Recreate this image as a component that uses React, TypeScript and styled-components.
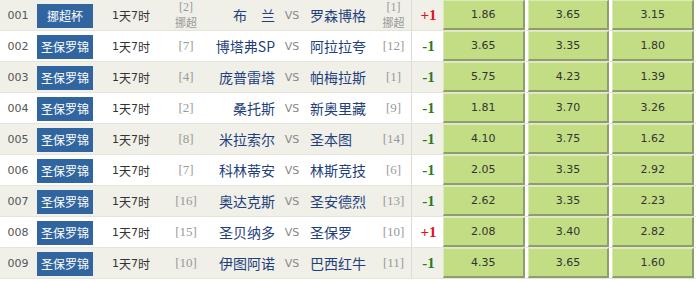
import styled, { createGlobalStyle } from 'styled-components';

const GlobalStyle = createGlobalStyle`
  html, body {
    margin: 0;
    padding: 0;
    background: #fff;
  }
  body {
    font-family: "DejaVu Sans", "Noto Sans CJK SC", sans-serif;
  }
`;

type Match = {
  no: string;
  league: string;
  homeRank: string;
  homeNote?: string;
  home: string;
  away: string;
  awayRank: string;
  awayNote?: string;
  handicap: string;
  odds: [string, string, string];
};

const MATCHES: Match[] = [
  { no: '001', league: '挪超杯', homeRank: '[2]', homeNote: '挪超', home: '布　兰', away: '罗森博格', awayRank: '[1]', awayNote: '挪超', handicap: '+1', odds: ['1.86', '3.65', '3.15'] },
  { no: '002', league: '圣保罗锦', homeRank: '[7]', home: '博塔弗SP', away: '阿拉拉夸', awayRank: '[12]', handicap: '-1', odds: ['3.65', '3.35', '1.80'] },
  { no: '003', league: '圣保罗锦', homeRank: '[4]', home: '庞普雷塔', away: '帕梅拉斯', awayRank: '[1]', handicap: '-1', odds: ['5.75', '4.23', '1.39'] },
  { no: '004', league: '圣保罗锦', homeRank: '[2]', home: '桑托斯', away: '新奥里藏', awayRank: '[9]', handicap: '-1', odds: ['1.81', '3.70', '3.26'] },
  { no: '005', league: '圣保罗锦', homeRank: '[8]', home: '米拉索尔', away: '圣本图', awayRank: '[14]', handicap: '-1', odds: ['4.10', '3.75', '1.62'] },
  { no: '006', league: '圣保罗锦', homeRank: '[7]', home: '科林蒂安', away: '林斯竞技', awayRank: '[6]', handicap: '-1', odds: ['2.05', '3.35', '2.92'] },
  { no: '007', league: '圣保罗锦', homeRank: '[16]', home: '奥达克斯', away: '圣安德烈', awayRank: '[13]', handicap: '-1', odds: ['2.62', '3.35', '2.23'] },
  { no: '008', league: '圣保罗锦', homeRank: '[15]', home: '圣贝纳多', away: '圣保罗', awayRank: '[10]', handicap: '+1', odds: ['2.08', '3.40', '2.82'] },
  { no: '009', league: '圣保罗锦', homeRank: '[10]', home: '伊图阿诺', away: '巴西红牛', awayRank: '[11]', handicap: '-1', odds: ['4.35', '3.65', '1.60'] },
];

const Table = styled.div`
  width: 696px;
  display: flex;
  flex-direction: column;
`;

const Row = styled.div<{ $odd: boolean }>`
  display: grid;
  grid-template-columns: 36px 58px 74px 36px 76px 24px 72px 35px 32px 253px;
  height: 30px;
  border-bottom: 1px solid #e4e4da;
  background: ${p => (p.$odd ? '#f0f0e8' : '#ffffff')};
`;

const Cell = styled.div<{ $align?: 'left' | 'right' | 'center' }>`
  display: flex;
  align-items: center;
  justify-content: ${p => (p.$align === 'left' ? 'flex-start' : p.$align === 'right' ? 'flex-end' : 'center')};
  white-space: nowrap;
`;

const Num = styled(Cell)`
  color: #555;
  font-size: 11px;
  font-family: "DejaVu Sans", sans-serif;
`;

const Badge = styled.div`
  width: 56px;
  height: 24px;
  margin-top: 1px;
  display: flex;
  align-items: center;
  justify-content: center;
  background: #3165a0;
  color: #fff;
  font-size: 12px;
  font-family: "Noto Sans CJK SC", sans-serif;
`;

const Time = styled(Cell)`
  color: #333;
  font-size: 12px;
  font-family: "DejaVu Sans", "Noto Sans CJK SC", sans-serif;
  & > b {
    font-weight: normal;
    font-family: "Noto Sans CJK SC", sans-serif;
  }
  & > span {
    font-size: 11px;
  }
`;

const Rank = styled(Cell)<{ $stacked?: boolean }>`
  flex-direction: column;
  color: #999;
  font-size: ${p => (p.$stacked ? '12px' : '13px')};
  font-family: "Liberation Serif", serif;
  & > span {
    display: block;
    line-height: 14px;
  }
  & > small {
    display: block;
    font-size: 11px;
    font-family: "Noto Sans CJK SC", sans-serif;
    line-height: 16px;
  }
`;

const Team = styled(Cell)<{ $side: 'home' | 'away' }>`
  color: #1f3f7c;
  font-size: 14px;
  font-family: "Noto Sans CJK SC", sans-serif;
  padding: ${p => (p.$side === 'home' ? '0 5px 0 0' : '0 0 0 6px')};
`;

const Vs = styled(Cell)`
  color: #888;
  font-size: 11px;
  font-family: "DejaVu Sans", sans-serif;
`;

const Handicap = styled(Cell)<{ $plus: boolean }>`
  border-left: 1px solid #dcdcd2;
  color: ${p => (p.$plus ? '#e3101e' : '#2a7a22')};
  font-size: 15px;
  font-weight: bold;
  font-family: "Liberation Serif", serif;
  padding-left: 2px;
`;

const OddsGroup = styled.div`
  display: grid;
  grid-template-columns: repeat(3, 1fr);
  gap: 3px;
  padding: 0 2px 0 0;
  background: #ffffff;
`;

const Odd = styled.div`
  display: flex;
  align-items: center;
  justify-content: center;
  box-sizing: border-box;
  height: 30px;
  background: #c3dd84;
  border-top: 1px solid #dcebb6;
  border-left: 1px solid #dcebb6;
  border-right: 2px solid #8e9d6c;
  border-bottom: 2px solid #8e9d6c;
  color: #333;
  font-size: 11px;
  font-family: "DejaVu Sans", sans-serif;
`;

const App = () => (
  <>
    <GlobalStyle />
    <Table>
      {MATCHES.map((m, i) => (
        <Row key={m.no} $odd={i % 2 === 0}>
          <Num>{m.no}</Num>
          <Cell>
            <Badge>{m.league}</Badge>
          </Cell>
          <Time>
            <span>1</span><b>天</b><span>7</span><b>时</b>
          </Time>
          <Rank $stacked={!!m.homeNote}>
            <span>{m.homeRank}</span>
            {m.homeNote && <small>{m.homeNote}</small>}
          </Rank>
          <Team $side="home" $align="right">{m.home}</Team>
          <Vs>VS</Vs>
          <Team $side="away" $align="left">{m.away}</Team>
          <Rank $stacked={!!m.awayNote}>
            <span>{m.awayRank}</span>
            {m.awayNote && <small>{m.awayNote}</small>}
          </Rank>
          <Handicap $plus={m.handicap.startsWith('+')}>{m.handicap}</Handicap>
          <OddsGroup>
            {m.odds.map((o, j) => (
              <Odd key={j}>{o}</Odd>
            ))}
          </OddsGroup>
        </Row>
      ))}
    </Table>
  </>
);

export default App;
